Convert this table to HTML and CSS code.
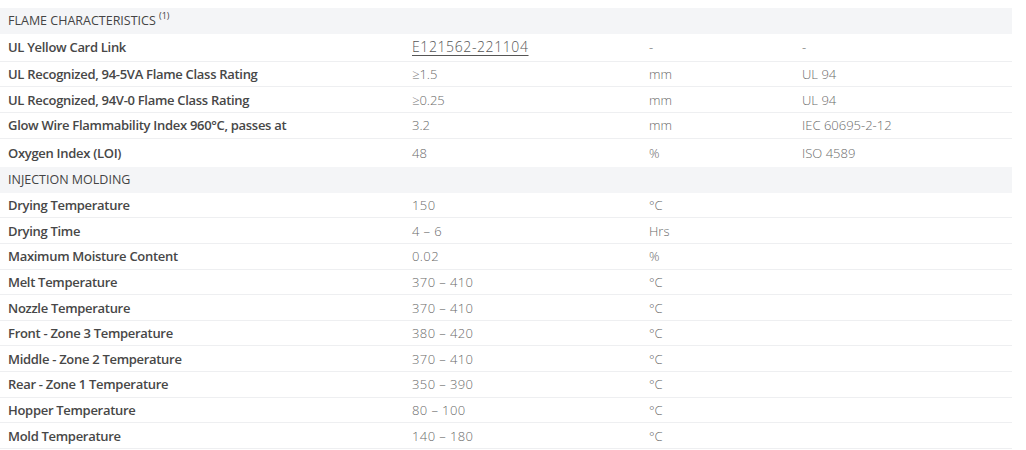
FILE: index.html
```html
<!DOCTYPE html>
<html>
<head>
<meta charset="utf-8">
<link rel="stylesheet" href="styles.css">
</head>
<body>
<div class="sheet">
  <section class="group">
    <div class="row head"><div class="c lab">FLAME CHARACTERISTICS <sup>(1)</sup></div></div>
    <div class="row tall"><div class="c lab">UL Yellow Card Link</div><div class="c val"><a href="#" class="link">E121562-221104</a></div><div class="c val">-</div><div class="c val">-</div></div>
    <div class="row"><div class="c lab">UL Recognized, 94-5VA Flame Class Rating</div><div class="c val">≥1.5</div><div class="c val">mm</div><div class="c val">UL 94</div></div>
    <div class="row"><div class="c lab">UL Recognized, 94V-0 Flame Class Rating</div><div class="c val">≥0.25</div><div class="c val">mm</div><div class="c val">UL 94</div></div>
    <div class="row"><div class="c lab">Glow Wire Flammability Index 960°C, passes at</div><div class="c val">3.2</div><div class="c val">mm</div><div class="c val">IEC 60695-2-12</div></div>
    <div class="row last"><div class="c lab">Oxygen Index (LOI)</div><div class="c val">48</div><div class="c val">%</div><div class="c val">ISO 4589</div></div>
  </section>
  <section class="group">
    <div class="row head"><div class="c lab">INJECTION MOLDING</div></div>
    <div class="row"><div class="c lab">Drying Temperature</div><div class="c val num">150</div><div class="c val">°C</div><div class="c val"></div></div>
    <div class="row"><div class="c lab">Drying Time</div><div class="c val num">4 – 6</div><div class="c val">Hrs</div><div class="c val"></div></div>
    <div class="row"><div class="c lab">Maximum Moisture Content</div><div class="c val num">0.02</div><div class="c val">%</div><div class="c val"></div></div>
    <div class="row"><div class="c lab">Melt Temperature</div><div class="c val num">370 – 410</div><div class="c val">°C</div><div class="c val"></div></div>
    <div class="row"><div class="c lab">Nozzle Temperature</div><div class="c val num">370 – 410</div><div class="c val">°C</div><div class="c val"></div></div>
    <div class="row"><div class="c lab">Front - Zone 3 Temperature</div><div class="c val num">380 – 420</div><div class="c val">°C</div><div class="c val"></div></div>
    <div class="row"><div class="c lab">Middle - Zone 2 Temperature</div><div class="c val num">370 – 410</div><div class="c val">°C</div><div class="c val"></div></div>
    <div class="row"><div class="c lab">Rear - Zone 1 Temperature</div><div class="c val num">350 – 390</div><div class="c val">°C</div><div class="c val"></div></div>
    <div class="row"><div class="c lab">Hopper Temperature</div><div class="c val num">80 – 100</div><div class="c val">°C</div><div class="c val"></div></div>
    <div class="row"><div class="c lab">Mold Temperature</div><div class="c val num">140 – 180</div><div class="c val">°C</div><div class="c val"></div></div>
  </section>
</div>
</body>
</html>
```
FILE: styles.css
```css
html, body {
  margin: 0;
  padding: 0;
  background: #ffffff;
}
body {
  font-family: "Open Sans", "Noto Sans", "Liberation Sans", sans-serif;
  font-size: 13px;
  color: #3c3c3c;
}
.sheet {
  width: 1012px;
  padding-top: 8px;
}
.row {
  display: grid;
  grid-template-columns: 404px 237px 153px 218px;
  height: 25.67px;
  align-items: center;
  border-bottom: 1.5px solid #eeeff1;
  box-sizing: border-box;
}
.row.head {
  background: #f4f5f7;
  border-bottom: none;
  height: 25.5px;
}
.row.tall {
  height: 28.2px;
}
.row.last {
  height: 28.4px;
  border-bottom: none;
}
.c {
  padding-left: 8px;
  white-space: nowrap;
  line-height: 16px;
}
.lab {
  font-weight: 600;
  letter-spacing: -0.3px;
  color: #474747;
}
.head .lab {
  font-weight: 400;
  letter-spacing: 0;
  color: #444;
  font-size: 12.5px;
}
.head sup {
  font-size: 9px;
  vertical-align: 6px;
  line-height: 0;
}
.val {
  font-weight: 300;
  color: #6a6a6a;
}
.num {
  letter-spacing: 0.4px;
}
.link {
  color: #555;
  text-decoration: underline;
  text-underline-offset: 3px;
  font-size: 14px;
  letter-spacing: 0.6px;
}
```
